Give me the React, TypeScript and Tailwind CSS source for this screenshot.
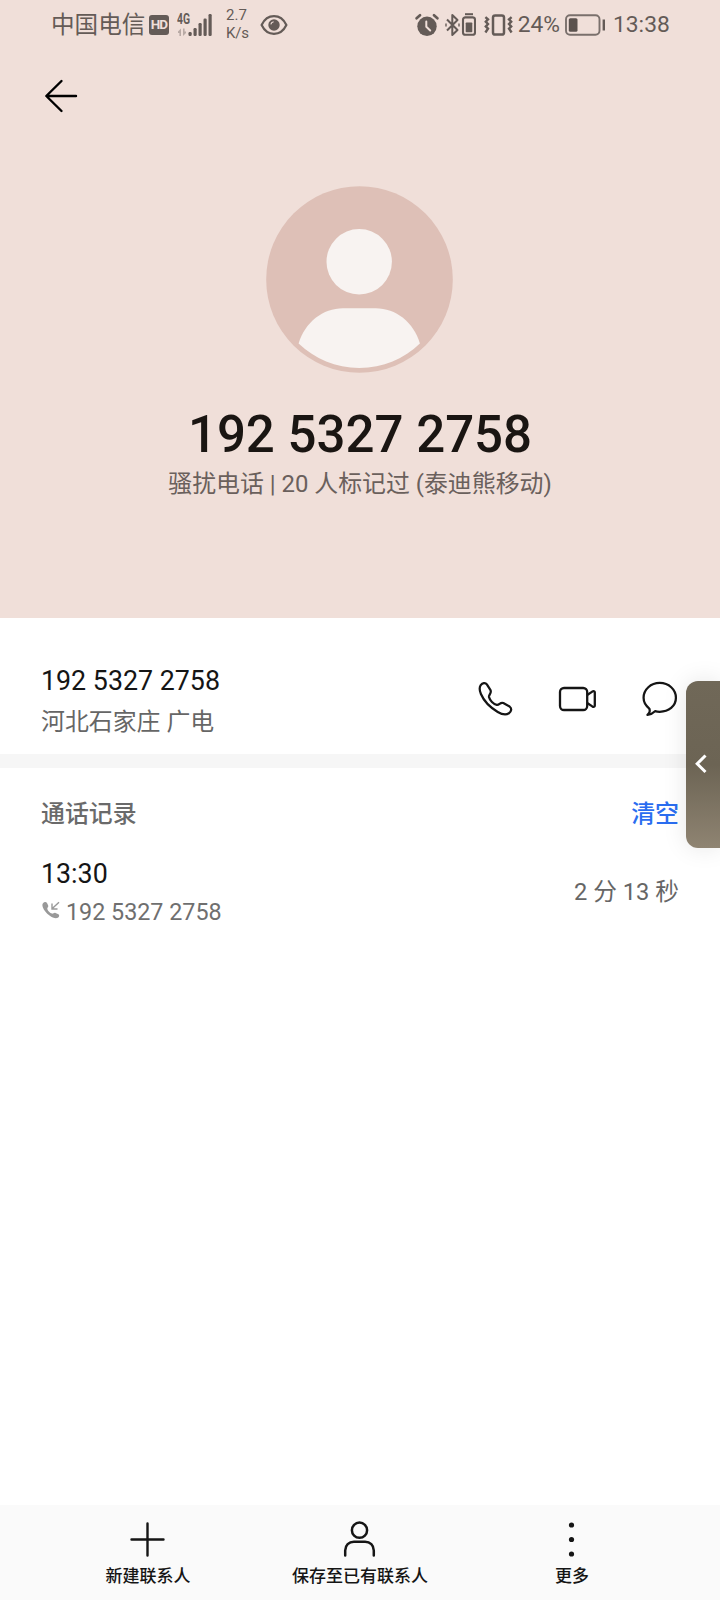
import { ReactNode } from "react";

const PHONE_NUMBER = "192 5327 2758";

function SignalIcon() {
  return (
    <svg width="36" height="24" viewBox="0 0 36 24" fill="#645b57">
      <path d="M4 23V15.5L1 18.6V20H2.4V23ZM6 15.5V23L9 19.9V18.4H7.6V15.5Z" opacity="0.4" />
      <rect x="11.5" y="19" width="3.2" height="4" rx="1.2" />
      <rect x="16.5" y="15" width="3.2" height="8" rx="1.2" />
      <rect x="21.5" y="10" width="3.2" height="13" rx="1.2" />
      <rect x="26.5" y="5.5" width="3.2" height="17.5" rx="1.2" />
      <rect x="31.5" y="1" width="3.2" height="22" rx="1.2" />
    </svg>
  );
}

function EyeIcon() {
  return (
    <svg width="28" height="22" viewBox="0 0 28 22" fill="none">
      <path d="M1.6 11C4.5 5 9 2.2 14 2.2S23.5 5 26.4 11C23.5 17 19 19.8 14 19.8S4.5 17 1.6 11Z" stroke="#645b57" strokeWidth="2.2" strokeLinejoin="round" />
      <circle cx="14" cy="11" r="5.7" fill="#645b57" />
      <path d="M10.8 10.4A3.4 3.4 0 0 1 13.6 7.7" stroke="#f0dfd9" strokeWidth="1.1" />
    </svg>
  );
}

function AlarmIcon() {
  return (
    <svg width="24" height="24" viewBox="0 0 24 24" fill="none">
      <circle cx="12" cy="13.3" r="9.7" fill="#645b57" />
      <path d="M1.6 5.3L5 2.2M22.4 5.3L19 2.2" stroke="#645b57" strokeWidth="2.6" strokeLinecap="round" />
      <path d="M11.3 8.5V13.8L15.2 17.5" stroke="#f0dfd9" strokeWidth="2" strokeLinecap="round" strokeLinejoin="round" />
    </svg>
  );
}

function BluetoothIcon() {
  return (
    <svg width="31" height="24" viewBox="0 0 31 24" fill="none" stroke="#645b57">
      <path d="M2 6.5L12.5 17L7.3 22V2L12.5 7L2 17.5" strokeWidth="2" strokeLinejoin="round" />
      <path d="M1 10.5v3M14 10.5v3" strokeWidth="1.4" />
      <path d="M20 1.2h8" strokeWidth="2" />
      <rect x="18" y="4.4" width="12" height="17.4" rx="2.4" strokeWidth="2.1" />
      <rect x="20.7" y="9.5" width="6.6" height="9.8" rx="0.8" fill="#645b57" stroke="none" />
    </svg>
  );
}

function VibrateIcon() {
  return (
    <svg width="29" height="24" viewBox="0 0 29 24" fill="none" stroke="#645b57">
      <rect x="9" y="2.4" width="11" height="19.2" rx="2.2" strokeWidth="2.5" />
      <path d="M1.4 4.2L4 6.4L1.8 8.8L4 11L1.8 13.4L4 15.6L1.4 19.5" strokeWidth="2.4" />
      <path d="M27.6 4.2L25 6.4L27.2 8.8L25 11L27.2 13.4L25 15.6L27.6 19.5" strokeWidth="2.4" />
    </svg>
  );
}

function BatteryIcon() {
  return (
    <svg width="41" height="22" viewBox="0 0 41 22" fill="none">
      <rect x="1" y="1.2" width="33.5" height="19.6" rx="4" stroke="#7a706c" strokeWidth="1.9" />
      <rect x="3.8" y="4.2" width="8.7" height="13.6" rx="1.5" fill="#5b524e" />
      <path d="M38.8 5.5V16.5" stroke="#645b57" strokeWidth="2.4" />
    </svg>
  );
}

function StatusBar() {
  return (
    <div className="flex h-12 items-center justify-between px-[50px] pt-px text-[#645b57]">
      <div className="flex items-center">
        <span className="ml-px w-[95px] whitespace-nowrap text-[23.6px] leading-6">中国电信</span>
        <span className="ml-[3px] flex h-5 w-5 items-center justify-center rounded-[3px] bg-[#645b57] text-[13.5px] font-bold leading-none tracking-[-0.8px] text-[#f0dfd9]">
          HD
        </span>
        <div className="relative ml-2 h-6">
          <SignalIcon />
          <span className="absolute left-0 top-0 origin-left scale-x-[0.74] text-[14px] font-bold leading-[13px]">4G</span>
        </div>
        <div className="-mt-px ml-[13px] w-[24px] text-[15px] leading-[18px]">
          <div>2.7</div>
          <div className="tracking-[-0.2px]">K/s</div>
        </div>
        <div className="ml-[10px]">
          <EyeIcon />
        </div>
      </div>
      <div className="flex items-center text-[22.8px] leading-6">
        <AlarmIcon />
        <div className="ml-1.5">
          <BluetoothIcon />
        </div>
        <div className="ml-[8px]">
          <VibrateIcon />
        </div>
        <span className="ml-[5px] mt-px">24%</span>
        <div className="ml-[5px]">
          <BatteryIcon />
        </div>
        <span className="ml-[7px] mt-px w-[57px]">13:38</span>
      </div>
    </div>
  );
}

function Avatar() {
  return (
    <svg width="187" height="187" viewBox="0 0 187 187">
      <circle cx="93.5" cy="93.5" r="93.3" fill="#dec0b7" />
      <circle cx="93.2" cy="75.8" r="32.7" fill="#f8f3f1" />
      <path d="M32.6 157.6C39 136 57 122.3 77 122.3H109.5C130 122.3 147.5 136 153.9 157.6C138 173 117 182 93.3 182S49 173 32.6 157.6Z" fill="#f8f3f1" />
    </svg>
  );
}

function Header() {
  return (
    <header className="h-[618px] bg-[#f0dfd9]">
      <StatusBar />
      <div className="flex h-24 items-center pl-11">
        <svg width="34" height="34" viewBox="0 0 34 34" fill="none" stroke="#000" strokeWidth="2.4" strokeLinecap="round" strokeLinejoin="round">
          <path d="M32 17H2.5M17.5 2L2.3 17L17.5 32" />
        </svg>
      </div>
      <div className="mt-[42px] flex flex-col items-center">
        <div className="mr-px">
          <Avatar />
        </div>
        <h1 className="mt-[32px] text-[51px] font-medium leading-[60px] text-[#1a1512]">{PHONE_NUMBER}</h1>
        <p className="mt-px text-[23.9px] leading-9 text-[#6a605c]">骚扰电话 | 20 人标记过 (泰迪熊移动)</p>
      </div>
    </header>
  );
}

function CallActions() {
  return (
    <div className="-mt-px flex gap-[46px] text-[#151515]">
      <svg width="36" height="36" viewBox="0 0 37 37" fill="none" stroke="currentColor" strokeWidth="2.3" strokeLinejoin="round">
        <path d="M2.8 4.2C4.5 1.8 7.6 1.3 9.1 3.4L12.7 9.2C14.6 12.3 10.8 13.8 11.3 16.5C12 19.8 16 23.9 19.3 24.5C22 25 22.8 21.3 26 22.6L32.5 26.3C35 28 34.4 31.6 31.8 33.2C28.5 35.2 24.5 34.3 20.3 31.8C12.5 27.2 6 20.5 3 13.4C1.7 10.2 1.2 6.5 2.8 4.2Z" />
      </svg>
      <svg width="38" height="36" viewBox="0 0 38 36" fill="none" stroke="currentColor" strokeWidth="2.3" strokeLinejoin="round" className="-ml-0.5">
        <rect x="2" y="7" width="27.2" height="22" rx="4" />
        <path d="M29.2 14L34.3 10.6C35.7 9.8 36.8 10.2 36.8 11.5V24.5C36.8 25.8 35.7 26.2 34.3 25.4L29.2 22" />
      </svg>
      <svg width="36" height="36" viewBox="0 0 36.5 36.5" fill="none" stroke="currentColor" strokeWidth="2.3" strokeLinejoin="round">
        <path d="M5.5 34.3C7.8 32.5 8.4 30.3 7.4 27.9C3.7 25 1.6 21.5 1.6 17C1.6 8.5 8.9 2 18 2S34.4 8.5 34.4 17S27 31.2 18 31.2C16.3 31.2 14.6 31 13.2 30.6C11 32.8 8.5 34 5.5 34.3Z" />
      </svg>
    </div>
  );
}

function NumberRow() {
  return (
    <section className="flex h-[136px] items-center justify-between pl-[41px] pr-[42px] pt-[27px]">
      <div className="pt-1.5">
        <div className="text-[26.8px] leading-8 text-[#151515]">{PHONE_NUMBER}</div>
        <div className="mt-[7px] text-[23.9px] leading-9 text-[#666]">河北石家庄 广电</div>
      </div>
      <CallActions />
    </section>
  );
}

function CallLog() {
  return (
    <section className="flex-1 px-[41px] pt-[28px]">
      <div className="flex items-center justify-between text-[23.9px] leading-9 font-medium">
        <h2 className="text-[#6a6a6a]">通话记录</h2>
        <button className="text-[#2a6df0]">清空</button>
      </div>
      <div className="mt-[26px] flex items-center justify-between">
        <div>
          <div className="text-[26.8px] leading-8 text-[#151515]">13:30</div>
          <div className="mt-[6px] flex items-center text-[#6f6f6f]">
            <svg width="18" height="18" viewBox="0 0 18 18" fill="#999" className="-mt-[4px] ml-px">
              <path d="M1 2.2C2.2.6 4.2.7 5 2L6.2 4.5C6.8 6 5 6.7 5.3 8C5.8 9.9 8 12.1 10 12.6C11.3 12.9 12 11.3 13.5 11.9L16.4 13.3C17.7 14.2 17.3 16 15.9 16.8C13.7 18 10.6 16.8 7.5 14.5C4.3 12.1 1.8 9 .8 6.2C.3 4.6.2 3.3 1 2.2Z" />
              <path d="M17 1.2L10.3 7.6M10 2.5V8H15.5" fill="none" stroke="#999" strokeWidth="1.4" />
            </svg>
            <span className="ml-[6px] text-[23.3px] leading-8">{PHONE_NUMBER}</span>
          </div>
        </div>
        <span className="-mt-0.5 text-[23.7px] leading-9 text-[#666]">2 分 13 秒</span>
      </div>
    </section>
  );
}

function BarItem({ label, children }: { label: string; children: ReactNode }) {
  return (
    <button className="flex w-[212px] flex-col items-center pt-4 text-[#151515]">
      {children}
      <span className="mt-[7px] text-[17px] font-medium leading-6">{label}</span>
    </button>
  );
}

function BottomBar() {
  return (
    <nav className="flex h-[95px] justify-center bg-[#fafafa]">
      <BarItem label="新建联系人">
        <svg width="36" height="36" viewBox="0 0 36 36" stroke="currentColor" strokeWidth="2.4" strokeLinecap="round">
          <path d="M17.5 2.5V34.5M1.5 18.5H33.5" />
        </svg>
      </BarItem>
      <BarItem label="保存至已有联系人">
        <svg width="36" height="36" viewBox="0 0 36 36" fill="none" stroke="currentColor" strokeWidth="2.5" strokeLinecap="round">
          <circle cx="17.5" cy="9.2" r="7.6" />
          <path d="M3.2 34.5V29.5C3.2 24.5 6.9 20.7 11.9 20.7H23.1C28.1 20.7 31.8 24.5 31.8 29.5V34.5" />
        </svg>
      </BarItem>
      <BarItem label="更多">
        <svg width="36" height="36" viewBox="0 0 36 36" fill="currentColor">
          <circle cx="17.5" cy="4" r="2.6" />
          <circle cx="17.5" cy="18.5" r="2.6" />
          <circle cx="17.5" cy="33" r="2.6" />
        </svg>
      </BarItem>
    </nav>
  );
}

export default function App() {
  return (
    <div className="relative flex h-[1600px] w-[720px] flex-col overflow-hidden bg-white font-[Roboto,'Noto_Sans_CJK_SC',sans-serif]">
      <Header />
      <NumberRow />
      <div className="h-[14px] bg-[#f6f6f6]" />
      <CallLog />
      <BottomBar />

      {/* Edge handle that floats above the page */}
      <div className="absolute right-0 top-[681px] flex h-[167px] w-[34px] items-center rounded-l-xl bg-linear-to-b from-[#706858] via-[#6c6454] to-[#8f8472] pl-[9px] shadow-[0_0_24px_rgba(0,0,0,0.10)]">
        <svg width="12" height="20" viewBox="0 0 12 20" fill="none" stroke="#fff" strokeWidth="3" className="-mt-0.5">
          <path d="M10.5 1.5L2.2 9.8L10.5 18" />
        </svg>
      </div>
    </div>
  );
}
